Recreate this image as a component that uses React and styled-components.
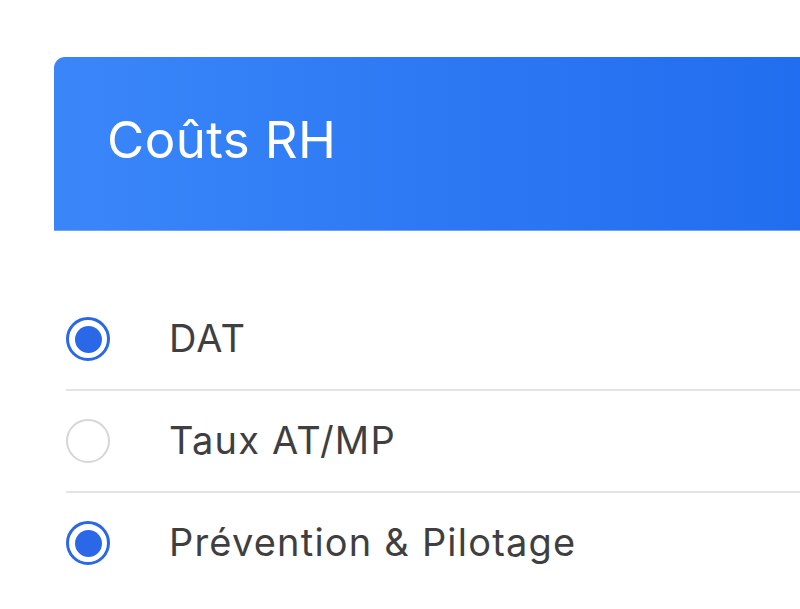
import React, { useState } from "react";
import styled, { createGlobalStyle } from "styled-components";

const GlobalStyle = createGlobalStyle`
  html, body {
    margin: 0;
    padding: 0;
    background: #ffffff;
    font-family: Inter, "Noto Sans", "Liberation Sans", sans-serif;
    overflow: hidden;
  }
  * { box-sizing: border-box; }
`;

const Page = styled.div`
  width: 800px;
  height: 609px;
  padding: 57px 0 0 54px;
  overflow: hidden;
`;

const Card = styled.section`
  width: 800px;
  display: flex;
  flex-direction: column;
`;

const Header = styled.header`
  height: 174px;
  display: flex;
  align-items: center;
  padding-left: 53px;
  border-top-left-radius: 11px;
  background: linear-gradient(90deg, #3a86f9 0%, #2c78f3 50%, #1f6cef 100%);
  border-bottom: 1px solid #6ea4f7;
`;

const Title = styled.h1`
  margin: 0;
  color: #ffffff;
  font-size: 51px;
  font-weight: 400;
  letter-spacing: 0.4px;
  padding-bottom: 8px;
`;

const List = styled.ul`
  list-style: none;
  margin: 58px 0 0 0;
  padding: 0 0 0 12px;
`;

const Row = styled.li`
  height: ${(p) => (p.$last ? "100px" : "102px")};
  display: flex;
  align-items: center;
  gap: 59px;
  border-bottom: ${(p) => (p.$last ? "none" : "2px solid #e4e4e6")};
  cursor: pointer;
`;

const Radio = styled.span`
  width: 44px;
  height: 44px;
  flex: none;
  border-radius: 50%;
  border: ${(p) => (p.$checked ? "3.5px solid #2a68e8" : "2.5px solid #d6d6d8")};
  display: flex;
  align-items: center;
  justify-content: center;
  background: #fff;

  &::after {
    content: "";
    display: ${(p) => (p.$checked ? "block" : "none")};
    width: 27px;
    height: 27px;
    border-radius: 50%;
    background: #2a68e8;
  }
`;

const Label = styled.span`
  font-size: 38px;
  color: #3f3f42;
  font-weight: 400;
  letter-spacing: 1.2px;
  padding-bottom: 3px;
`;

const options = ["DAT", "Taux AT/MP", "Prévention & Pilotage"];

export default function App() {
  const [checked, setChecked] = useState({ 0: true, 1: false, 2: true });
  return (
    <>
      <GlobalStyle />
      <Page>
        <Card>
          <Header>
            <Title>Coûts RH</Title>
          </Header>
          <List>
            {options.map((o, i) => (
              <Row
                key={o}
                $last={i === options.length - 1}
                onClick={() => setChecked((c) => ({ ...c, [i]: !c[i] }))}
              >
                <Radio $checked={checked[i]} />
                <Label>{o}</Label>
              </Row>
            ))}
          </List>
        </Card>
      </Page>
    </>
  );
}
